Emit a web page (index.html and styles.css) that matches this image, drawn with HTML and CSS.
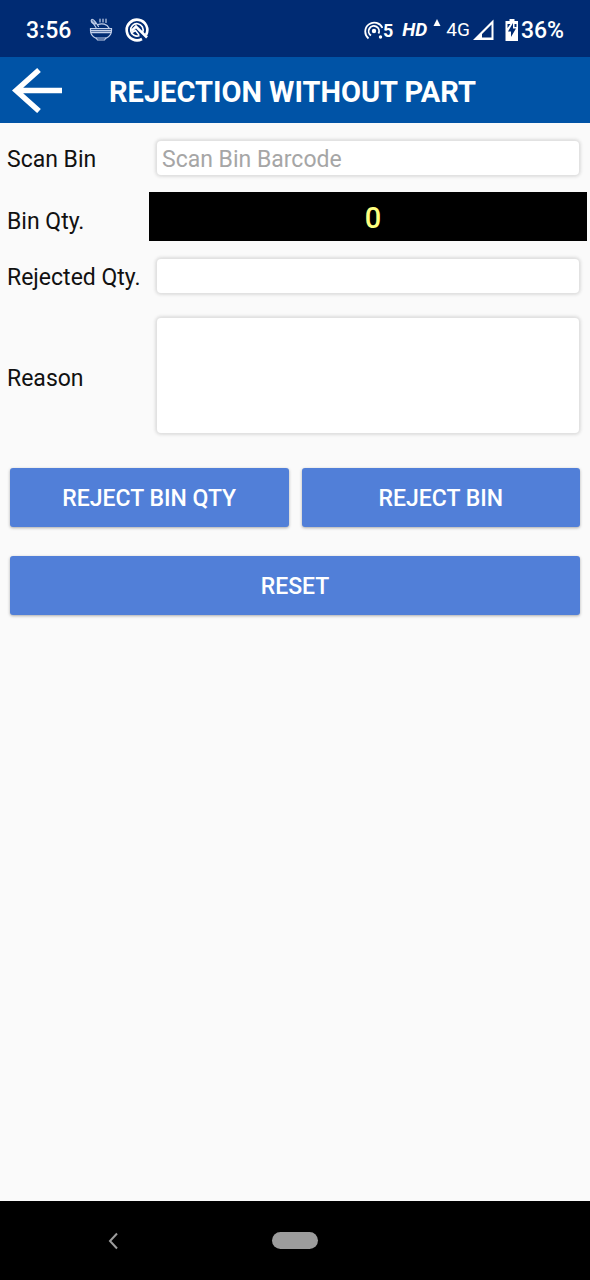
FILE: index.html
```html
<!DOCTYPE html>
<html lang="en">
<head>
<meta charset="utf-8">
<meta name="viewport" content="width=device-width, initial-scale=1">
<title>Rejection Without Part</title>
<link rel="stylesheet" href="styles.css">
</head>
<body>
<div class="status-bar">
  <div class="status-left">
    <span class="clock">3:56</span>
    <svg class="icon-bowl" width="24" height="24" viewBox="0 0 24 24" fill="none" stroke="currentColor" stroke-width="1.2" stroke-linecap="round">
      <path d="M1.500 10.500h21v2c0 3.500-2 6-5 7.500h-11c-3-1.500-5-4-5-7.500z"/>
      <path d="M2 12.500h20M2.500 14.500h19" stroke-width="1.500"/>
      <path d="M7 20l1.500 2h7l1.500-2"/>
      <path d="M9 6.500c4-1.500 9-.5 11 3.500M7 9.500L3.500 4M9.500 8.500L6.500 4"/>
      <path d="M5 6C1 4.500 2 1 3.500 1.500c1.500 0 3 2.500 3 4.500z" fill="currentColor" fill-opacity=".5"/>
      <path d="M11 4V1M14 4V1M17 4.500V1"/>
    </svg>
    <svg class="icon-q" width="24" height="24" viewBox="0 0 24 24" fill="none" stroke="currentColor">
      <path d="M17 21A10.300 10.300 0 1 1 21 17" stroke-width="2.600"/>
      <path d="M14.500 17.500A6.200 6.200 0 1 1 17.500 14.500" stroke-width="1.700"/>
      <path d="M6.500 13L11 8.500l11 11" stroke-width="2.600"/>
      <path d="M7 14.500l3.500-2 3.500 4.500" stroke-width="1.500"/>
    </svg>
  </div>
  <div class="status-right">
    <svg width="19" height="22" viewBox="0 0 19 22" fill="none" stroke="currentColor" stroke-width="1.800">
      <circle cx="10" cy="12" r="2.200" fill="currentColor" stroke="none"/>
      <path d="M7 16.500a5.200 5.200 0 1 1 7.500-2"/>
      <path d="M4.500 19.500A9 9 0 1 1 18.500 9"/>
      <circle cx="16.500" cy="18" r="1.700" fill="currentColor" stroke="none"/>
    </svg>
    <span class="hotspot-count">5</span>
    <span class="hd">HD</span>
    <svg class="icon-up" width="8" height="22" viewBox="0 0 8 22" fill="currentColor"><path d="M4 0l3.500 7h-7z"/></svg>
    <span class="network">4G</span>
    <svg class="icon-signal" width="21" height="22" viewBox="0 0 21 22"><path fill="currentColor" fill-rule="evenodd" d="M20.500.5V21H0zM18.500 5.500L9 15v3.500h9.500z"/></svg>
    <svg class="icon-battery" width="14" height="22" viewBox="0 0 14 22">
      <path fill="currentColor" d="M4.500 0h5v2H13v20H.5V2h4z"/>
      <path class="bolt" d="M2.500 5h3L2.500 9zM11.500 5h-2v3h2zM8 4L3 12.500h3v5.500l5-8.500H8z"/>
    </svg>
    <span class="battery-level">36%</span>
  </div>
</div>

<header class="app-bar">
  <button class="back" type="button" aria-label="Back">
    <svg width="50" height="46" viewBox="0 0 50 46" fill="none" stroke="currentColor" stroke-width="5.500"><path d="M27 3L4 23.500 27 44M4 23.500h46"/></svg>
  </button>
  <h1 class="title">REJECTION WITHOUT PART</h1>
</header>

<main class="content">
  <form class="form">
    <div class="row">
      <label class="label" for="scan">Scan Bin</label>
      <input class="field" id="scan" type="text" placeholder="Scan Bin Barcode">
    </div>
    <div class="row">
      <label class="label label-low" for="qty">Bin Qty.</label>
      <output class="quantity" id="qty">0</output>
    </div>
    <div class="row">
      <label class="label" for="rejected">Rejected Qty.</label>
      <input class="field" id="rejected" type="text" inputmode="numeric">
    </div>
    <div class="row">
      <label class="label label-area" for="reason">Reason</label>
      <textarea class="field field-area" id="reason"></textarea>
    </div>
    <div class="actions">
      <button class="action" type="button">REJECT BIN QTY</button>
      <button class="action" type="button">REJECT BIN</button>
      <button class="action action-wide" type="reset">RESET</button>
    </div>
  </form>
</main>

<nav class="nav-bar">
  <button class="nav-back" type="button" aria-label="Back">
    <svg width="12" height="18" viewBox="0 0 12 18" fill="none" stroke="currentColor" stroke-width="2"><path d="M10 1.500L3 9l7 7.500"/></svg>
  </button>
  <button class="nav-home" type="button" aria-label="Home"></button>
</nav>
</body>
</html>
```

FILE: styles.css
```css
* {
  box-sizing: border-box;
}

body {
  margin: 0;
  min-height: 100vh;
  display: flex;
  flex-direction: column;
  background: #fafafa;
  color: #111;
  font-family: Roboto, "Liberation Sans", sans-serif;
  font-size: 23px;
  line-height: 28px;
}

button {
  border: 0;
  padding: 0;
  font: inherit;
  color: inherit;
  background: none;
}

svg {
  display: block;
}

.status-bar {
  display: flex;
  justify-content: space-between;
  align-items: center;
  height: 57px;
  padding: 2px 26px 0;
  background: #002b73;
  color: #fff;
}

.status-left,
.status-right {
  display: flex;
  align-items: center;
}

.clock,
.battery-level {
  padding-top: 2px;
  font-weight: 500;
}

.icon-bowl {
  margin-left: 18px;
  color: #c3d0ea;
}

.icon-q {
  margin-left: 12px;
}

.hotspot-count {
  padding-top: 2px;
  font-size: 18px;
  font-weight: 700;
}

.hd {
  margin-left: 9px;
  font-size: 19px;
  font-weight: 700;
  font-style: italic;
}

.icon-up {
  margin-left: 6px;
}

.network {
  margin-left: 5px;
  font-size: 19px;
}

.icon-signal {
  margin-left: 3px;
}

.icon-battery {
  margin: 0 2px 0 11px;
}

.bolt {
  fill: #002b73;
}

.app-bar {
  display: flex;
  align-items: center;
  height: 66px;
  padding-left: 12px;
  background: #0053a6;
  color: #fff;
}

.title {
  margin: 4px 0 0 47px;
  font-size: 29px;
  line-height: 36px;
  font-weight: 700;
}

.content {
  flex: 1;
}

.row {
  display: grid;
  grid-template-columns: 142px 1fr;
  align-items: center;
  padding: 0 3px 0 7px;
}

.label {
  padding-top: 4px;
}

.label-low {
  padding-top: 10px;
}

.label-area {
  padding: 0 0 2px;
}

.field {
  display: block;
  height: 34px;
  margin: 18px 8px 17px;
  padding: 2px 5px 0;
  border: 0;
  border-radius: 4px;
  background: #fff;
  box-shadow: 0 0 3px 2px #dedede;
  font: inherit;
  color: inherit;
  min-width: 0;
}

.field::placeholder {
  color: #a6a6a6;
  opacity: 1;
}

.field-area {
  height: 115px;
  margin: 8px 8px 17px;
  resize: none;
}

.quantity {
  padding: 8px 0 5px;
  background: #000;
  color: #ffff80;
  font-size: 29px;
  line-height: 36px;
  font-weight: 500;
  text-align: center;
  text-indent: 10px;
}

.actions {
  display: grid;
  grid-template-columns: 1fr 1fr;
  gap: 29px 13px;
  padding: 18px 10px;
}

.action {
  height: 59px;
  padding-top: 3px;
  border-radius: 3px;
  background: #517fd8;
  box-shadow: 0 1px 3px #aaa;
  color: #fff;
  font-weight: 500;
}

.action-wide {
  grid-column: 1 / -1;
}

.nav-bar {
  display: grid;
  grid-template-columns: 1fr auto 1fr;
  align-items: center;
  height: 79px;
  background: #000;
  color: #9c9c9c;
}

.nav-back {
  justify-self: center;
  margin-right: 46px;
}

.nav-home {
  width: 46px;
  height: 17px;
  border-radius: 9px;
  background: #9c9c9c;
}
```
